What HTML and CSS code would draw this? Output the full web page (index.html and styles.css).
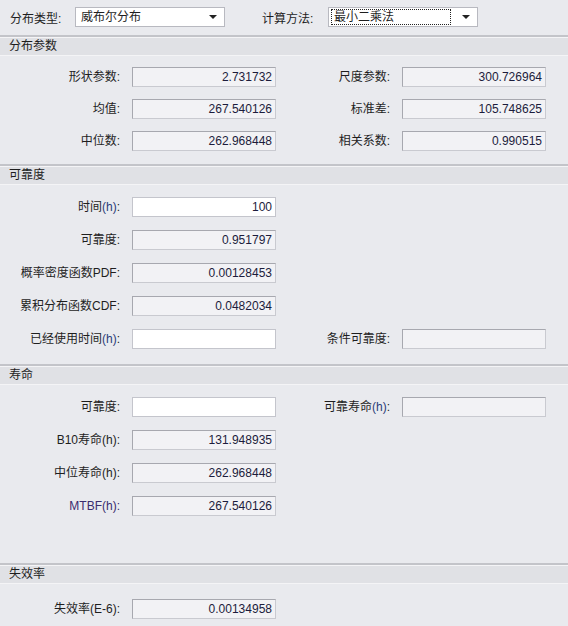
FILE: index.html
```html
<!DOCTYPE html>
<html lang="zh-CN">

<head>
    <meta charset="UTF-8">
    <title>分布计算</title>
    <link rel="stylesheet" href="styles.css">
</head>

<body>
    <div class="topbar">
        <label class="top-label">分布类型:</label>
        <div class="combo">
            <span class="combo-text">威布尔分布</span>
            <span class="combo-arrow"></span>
        </div>
        <label class="top-label method-label">计算方法:</label>
        <div class="combo">
            <span class="combo-text focused">最小二乘法</span>
            <span class="combo-arrow"></span>
        </div>
    </div>

    <!-- 分布参数 -->
    <div class="group">
        <div class="group-title">分布参数</div>
        <div class="group-body">
            <label>形状参数:</label>
            <div class="field readonly">2.731732</div>
            <label>尺度参数:</label>
            <div class="field readonly">300.726964</div>

            <label>均值:</label>
            <div class="field readonly">267.540126</div>
            <label>标准差:</label>
            <div class="field readonly">105.748625</div>

            <label>中位数:</label>
            <div class="field readonly">262.968448</div>
            <label>相关系数:</label>
            <div class="field readonly">0.990515</div>
        </div>
    </div>

    <!-- 可靠度 -->
    <div class="group">
        <div class="group-title">可靠度</div>
        <div class="group-body loose">
            <label>时间<span class="paren">(h)</span>:</label>
            <div class="field">100</div>
            <span></span><span></span>

            <label>可靠度:</label>
            <div class="field readonly">0.951797</div>
            <span></span><span></span>

            <label>概率密度函数PDF:</label>
            <div class="field readonly">0.00128453</div>
            <span></span><span></span>

            <label>累积分布函数CDF:</label>
            <div class="field readonly">0.0482034</div>
            <span></span><span></span>

            <label>已经使用时间<span class="paren">(h)</span>:</label>
            <div class="field"></div>
            <label>条件可靠度:</label>
            <div class="field readonly"></div>
        </div>
    </div>

    <!-- 寿命 -->
    <div class="group">
        <div class="group-title">寿命</div>
        <div class="group-body loose life">
            <label>可靠度:</label>
            <div class="field"></div>
            <label>可靠寿命<span class="paren">(h)</span>:</label>
            <div class="field readonly"></div>

            <label>B10寿命(h):</label>
            <div class="field readonly">131.948935</div>
            <span></span><span></span>

            <label>中位寿命(h):</label>
            <div class="field readonly">262.968448</div>
            <span></span><span></span>

            <label class="mtbf">MTBF(h):</label>
            <div class="field readonly">267.540126</div>
            <span></span><span></span>
        </div>
    </div>

    <!-- 失效率 -->
    <div class="group">
        <div class="group-title">失效率</div>
        <div class="group-body last">
            <label>失效率(E-6):</label>
            <div class="field readonly">0.00134958</div>
            <span></span><span></span>
        </div>
    </div>
</body>

</html>
```

FILE: styles.css
```css
* {
    margin: 0;
    padding: 0;
    box-sizing: border-box;
}

body {
    width: 568px;
    height: 626px;
    overflow: hidden;
    background-color: #e9eaee;
    font-family: "Liberation Sans", "Noto Sans CJK SC", sans-serif;
    font-size: 12px;
    color: #1e1e1e;
}

.topbar {
    display: flex;
    align-items: center;
    height: 35px;
    padding-left: 10px;
    padding-bottom: 1px;
}

.top-label {
    width: 65px;
}

.method-label {
    margin-left: 37px;
    width: 66px;
}

.combo {
    display: flex;
    align-items: center;
    width: 150px;
    height: 20px;
    background-color: #fff;
    border: 1px solid #b8b9c0;
    padding: 1px 2px;
}

.combo-text {
    flex: 1;
    height: 16px;
    line-height: 15px;
    padding-left: 2px;
    border: 1px solid transparent;
}

.combo-text.focused {
    border: 1px dotted #222;
    margin-right: 7px;
}

.combo-arrow {
    width: 0;
    height: 0;
    margin: 0 5px 0 4px;
    border-left: 4px solid transparent;
    border-right: 4px solid transparent;
    border-top: 4px solid #222;
}

.group-title {
    height: 20px;
    line-height: 19px;
    padding-left: 9px;
    background-color: #e0e1e5;
    border-top: 2px solid #c3c4c9;
    box-shadow: inset 0 1px 0 #f4f4f6, 0 1px 0 #f4f4f6;
}

.group-body {
    display: grid;
    grid-template-columns: 120px 144px 102px 144px;
    column-gap: 12px;
    row-gap: 12px;
    padding: 12px 0 13px;
}

.group-body.loose {
    row-gap: 13px;
    padding: 13px 0 15px;
}

.group-body.life {
    padding-bottom: 47px;
}

.group-body.last {
    padding-top: 16px;
}

.group-body label {
    text-align: right;
    line-height: 20px;
    white-space: nowrap;
}

.paren {
    color: #2c3c7a;
}

.mtbf {
    color: #3a2c6e;
}

.field {
    height: 20px;
    line-height: 18px;
    padding-right: 3px;
    text-align: right;
    color: #1c1c3c;
    background-color: #fff;
    border: 1px solid #c4c5cc;
}

.field.readonly {
    background-color: #f2f2f5;
    border-color: #c9cad0;
    border-top-color: #a7a8af;
    border-left-color: #a7a8af;
}
```
